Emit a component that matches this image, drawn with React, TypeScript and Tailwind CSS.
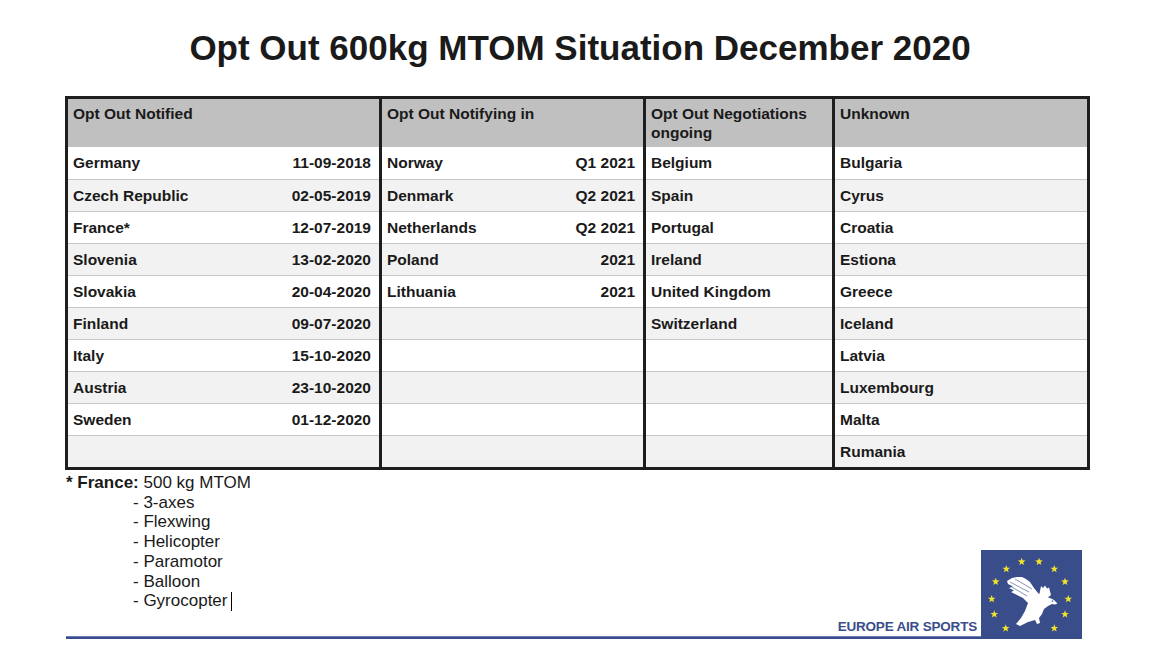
import React from 'react';

type Row = { name: string; value?: string };

const COLUMNS: { title: string; width: string; rows: Row[] }[] = [
  {
    title: 'Opt Out Notified',
    width: 'w-[314px]',
    rows: [
      { name: 'Germany', value: '11-09-2018' },
      { name: 'Czech Republic', value: '02-05-2019' },
      { name: 'France*', value: '12-07-2019' },
      { name: 'Slovenia', value: '13-02-2020' },
      { name: 'Slovakia', value: '20-04-2020' },
      { name: 'Finland', value: '09-07-2020' },
      { name: 'Italy', value: '15-10-2020' },
      { name: 'Austria', value: '23-10-2020' },
      { name: 'Sweden', value: '01-12-2020' },
      { name: '' },
    ],
  },
  {
    title: 'Opt Out Notifying in',
    width: 'w-[264px]',
    rows: [
      { name: 'Norway', value: 'Q1 2021' },
      { name: 'Denmark', value: 'Q2 2021' },
      { name: 'Netherlands', value: 'Q2 2021' },
      { name: 'Poland', value: '2021' },
      { name: 'Lithuania', value: '2021' },
      { name: '' },
      { name: '' },
      { name: '' },
      { name: '' },
      { name: '' },
    ],
  },
  {
    title: 'Opt Out Negotiations ongoing',
    width: 'w-[189px]',
    rows: [
      { name: 'Belgium' },
      { name: 'Spain' },
      { name: 'Portugal' },
      { name: 'Ireland' },
      { name: 'United Kingdom' },
      { name: 'Switzerland' },
      { name: '' },
      { name: '' },
      { name: '' },
      { name: '' },
    ],
  },
  {
    title: 'Unknown',
    width: 'flex-1',
    rows: [
      { name: 'Bulgaria' },
      { name: 'Cyrus' },
      { name: 'Croatia' },
      { name: 'Estiona' },
      { name: 'Greece' },
      { name: 'Iceland' },
      { name: 'Latvia' },
      { name: 'Luxembourg' },
      { name: 'Malta' },
      { name: 'Rumania' },
    ],
  },
];

const FRANCE_TYPES = ['3-axes', 'Flexwing', 'Helicopter', 'Paramotor', 'Balloon', 'Gyrocopter'];

const STARS: [number, number][] = [
  [40.7, 11.7], [58, 11.7], [73.3, 19], [84, 31.7], [87.3, 49], [84, 64.3],
  [73.3, 78.3], [24.7, 78.3], [13.3, 64.3], [10.7, 49], [14.7, 31.7], [25.3, 19],
];

function starPoints(cx: number, cy: number, r: number) {
  const pts: string[] = [];
  for (let i = 0; i < 10; i++) {
    const a = -Math.PI / 2 + (i * Math.PI) / 5;
    const rr = i % 2 === 0 ? r : r * 0.42;
    pts.push(`${(cx + rr * Math.cos(a)).toFixed(2)},${(cy + rr * Math.sin(a)).toFixed(2)}`);
  }
  return pts.join(' ');
}

function EasLogo() {
  return (
    <svg width="101" height="89" viewBox="0 0 101 89" className="block">
      <rect width="101" height="89" fill="#3a4d8b" />
      {STARS.map(([x, y], i) => (
        <polygon key={i} points={starPoints(x, y, 4)} fill="#f1e22a" />
      ))}
      {/* far wing */}
      <path d="M58 46 L60 36 L62 38 L64 35.5 L66 38.5 L68 37.5 L70 45 L65 49 Z" fill="#fff" />
      {/* near wing, body, head */}
      <path
        d="M26 31 L31 28 L36 27 L41 27 L45 29 L49 32 L53 38 L57 43 L61 46 L66 47 L70 48.5 L73 50 L76.5 53.5 L74 54.5 L71 54 L67 56 L63 59 L61 64 L58 68 L59 73 L56 74 L54 70 L47 72 L39 76 L35 74 L40 68 L44 61 L47 53 L42 48 L36 45 L30 42 L33 40.5 L28 38 L32 36.5 L27 34 Z"
        fill="#fff"
      />
      <g stroke="#3a4d8b" strokeWidth="0.6">
        <line x1="29" y1="32" x2="48" y2="42" />
        <line x1="30" y1="36.5" x2="46" y2="46" />
        <line x1="34" y1="29" x2="51" y2="39" />
      </g>
      <circle cx="71.5" cy="51" r="0.8" fill="#3a4d8b" />
    </svg>
  );
}

export default function App() {
  return (
    <div className="w-[1160px] h-[652px] bg-white text-[#1a1a1a] font-['Liberation_Sans',Arial,sans-serif] overflow-hidden">
      <h1 className="pt-[28px] h-[68px] text-center text-[35px] leading-[40px] font-bold">
        Opt Out 600kg MTOM Situation December 2020
      </h1>

      <div className="ml-[65px] mt-[28px] w-[1025px] flex border-[3px] border-[#1e1e1e]">
        {COLUMNS.map((col, ci) => (
          <div key={col.title} className={`${col.width} ${ci < 3 ? 'border-r-[3px] border-[#1e1e1e]' : ''}`}>
            <div className="h-[48px] bg-[#c0c0c0] px-[5px] pt-[5px] text-[15.5px] leading-[19px] font-bold">
              {col.title}
            </div>
            {col.rows.map((row, ri) => (
              <div
                key={ri}
                className={`h-[32px] flex items-center justify-between pl-[5px] pr-[8px] text-[15.5px] font-bold ${
                  ri > 0 ? 'border-t border-[#c8c8c8]' : ''
                } ${ri % 2 === 1 ? 'bg-[#f2f2f2]' : 'bg-white'}`}
              >
                <span>{row.name}</span>
                {row.value && <span>{row.value}</span>}
              </div>
            ))}
          </div>
        ))}
      </div>

      <div className="ml-[66px] mt-[3px] w-[1016px] flex items-end">
        <div className="flex-1 flex flex-col">
          <div className="text-[17px] leading-[19.7px]">
            <div>
              <span className="font-bold">* France:</span> 500 kg MTOM
            </div>
            {FRANCE_TYPES.map((t, i) => (
              <div key={t} className="pl-[67px] flex items-center">
                <span>- {t}</span>
                {i === FRANCE_TYPES.length - 1 && (
                  <span className="inline-block ml-[4px] w-px h-[19px] bg-black" />
                )}
              </div>
            ))}
          </div>
          <div className="mt-[8px] pr-[4px] text-right text-[13.5px] leading-[16px] font-bold text-[#3a4d8b] tracking-[-0.2px]">
            EUROPE AIR SPORTS
          </div>
          <div className="mt-[1px] h-[3px] bg-[#3a4d8b] border-t border-[#6a7db5]" />
        </div>
        <EasLogo />
      </div>
    </div>
  );
}
